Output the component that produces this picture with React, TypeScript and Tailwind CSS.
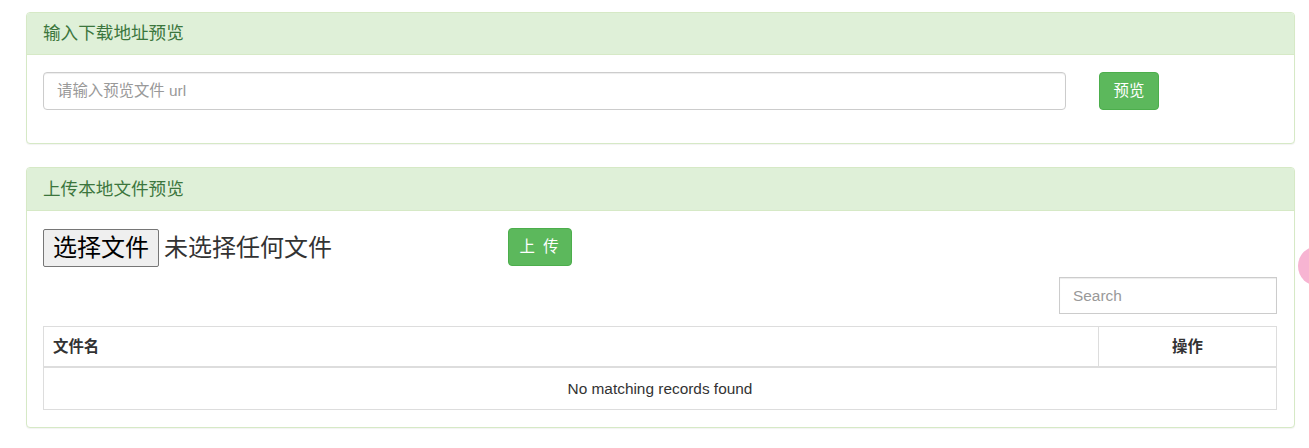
import React from "react";

const font = { fontFamily: '"Liberation Sans", "Noto Sans CJK SC", Arial, sans-serif' };

export default function App() {
  return (
    <div
      className="relative w-full h-[448px] overflow-hidden bg-white text-[#333] pt-[12px] pl-[26px]"
      style={font}
    >
      <div className="w-[1269px]">
        {/* Panel 1 */}
        <div className="border border-[#d6e9c6] rounded-[4px] bg-white shadow-[0_1px_1px_rgba(0,0,0,0.05)]">
          <div className="h-[42px] bg-[#dff0d8] border-b border-[#d6e9c6] rounded-t-[3px] flex items-center px-[16px] text-[#3c763d] text-[17.6px]">
            输入下载地址预览
          </div>
          <div className="pl-[16px] pr-[17px] pt-[17px] pb-[33px] flex items-center">
            <input
              type="text"
              placeholder="请输入预览文件 url"
              className="w-[1023px] h-[38px] border border-[#ccc] rounded-[4px] px-[13px] text-[15.4px] text-[#555] placeholder:text-[#999] shadow-[inset_0_1px_1px_rgba(0,0,0,0.075)] outline-none"
            />
            <button className="ml-[33px] w-[60px] h-[38px] rounded-[4px] bg-[#5cb85c] border border-[#4cae4c] text-white text-[15.4px]">
              预览
            </button>
          </div>
        </div>

        {/* Panel 2 */}
        <div className="mt-[23px] border border-[#d6e9c6] rounded-[4px] bg-white shadow-[0_1px_1px_rgba(0,0,0,0.05)]">
          <div className="h-[43px] bg-[#dff0d8] border-b border-[#d6e9c6] rounded-t-[3px] flex items-center px-[16px] text-[#3c763d] text-[17.6px]">
            上传本地文件预览
          </div>
          <div className="pl-[16px] pr-[17px] pt-[17px] pb-[17px]">
            <div className="flex items-start h-[39px]">
              <div className="w-[465px] flex items-center pt-[1px]">
                <span className="h-[38px] w-[116px] flex items-center justify-center bg-[#efefef] border border-[#767676] rounded-[2px] text-[24px] text-black leading-none">
                  选择文件
                </span>
                <span className="ml-[5px] text-[24px] text-[#333] leading-none">未选择任何文件</span>
              </div>
              <button className="w-[64px] h-[38px] rounded-[4px] bg-[#5cb85c] border border-[#4cae4c] text-white text-[15.4px] tracking-[2px]">
                上 传
              </button>
            </div>
            <div className="flex justify-end mt-[10px]">
              <input
                type="text"
                placeholder="Search"
                className="w-[218px] h-[37px] border border-[#ccc] px-[13px] text-[15.4px] placeholder:text-[#999] outline-none shadow-[inset_0_1px_1px_rgba(0,0,0,0.075)]"
              />
            </div>
            <div className="mt-[12px] border border-[#ddd]">
              <div className="flex h-[41px] border-b-2 border-[#ddd] font-bold text-[15.4px] text-[#333]">
                <div className="flex-1 flex items-center px-[9px]">文件名</div>
                <div className="w-[178px] border-l border-[#ddd] flex items-center justify-center">操作</div>
              </div>
              <div className="h-[41px] flex items-center justify-center text-[15.4px] text-[#333]">
                No matching records found
              </div>
            </div>
          </div>
        </div>
      </div>

      <div className="absolute left-[1298px] top-[246px] w-[40px] h-[40px] rounded-full bg-[#f7b4d2]" />
    </div>
  );
}
